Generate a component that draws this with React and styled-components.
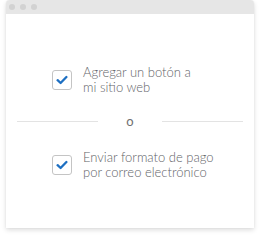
import React from "react";
import styled, { createGlobalStyle } from "styled-components";

const Global = createGlobalStyle`
  html, body { margin: 0; padding: 0; background: #ffffff; }
  body { font-family: "Lato", "Open Sans", sans-serif; }
`;

const Page = styled.div`
  width: 260px;
  height: 240px;
  padding-left: 6px;
  box-sizing: border-box;
`;

const Window = styled.div`
  width: 248px;
  height: 228px;
  background: #ffffff;
  border-radius: 4px 4px 0 0;
  box-shadow: 0 2px 5px rgba(0, 0, 0, 0.14), 0 0 1px rgba(0, 0, 0, 0.12);
  display: flex;
  flex-direction: column;
`;

const TitleBar = styled.div`
  height: 14px;
  background: #e6e6e6;
  border-radius: 4px 4px 0 0;
  display: flex;
  align-items: center;
  gap: 5px;
  padding-left: 3px;
`;

const Dot = styled.span`
  width: 6px;
  height: 6px;
  border-radius: 50%;
  background: #d2d2d2;
`;

const Body = styled.div`
  flex: 1;
  display: flex;
  flex-direction: column;
  padding-top: 51px;
`;

const Option = styled.label`
  display: flex;
  align-items: center;
  gap: 11px;
  padding-left: 46px;
`;

const Box = styled.span`
  width: 18px;
  height: 18px;
  border: 1px solid #c4c4c4;
  border-radius: 3px;
  display: flex;
  align-items: center;
  justify-content: center;
  flex-shrink: 0;
`;

const Text = styled.span`
  font-size: 13px;
  font-weight: 300;
  line-height: 15px;
  color: #5f6468;
`;

const Divider = styled.div`
  display: flex;
  align-items: center;
  padding: 0 11px;
  margin: 19px 0 21px;
  height: 15px;
`;

const Line = styled.span`
  flex: 1;
  height: 1px;
  background: #e3e3e3;
`;

const Or = styled.span`
  width: 64px;
  text-align: center;
  font-size: 13px;
  line-height: 15px;
  color: #707070;
`;

const Check = () => (
  <svg width="12" height="10" viewBox="0 0 12 10">
    <path d="M1.6 5.2 L4.6 8 L10.4 2" fill="none" stroke="#1d6fc2" strokeWidth="2.3" strokeLinecap="round" strokeLinejoin="round" />
  </svg>
);

export default function App() {
  return (
    <>
      <Global />
      <Page>
        <Window>
          <TitleBar>
            <Dot />
            <Dot />
            <Dot />
          </TitleBar>
          <Body>
            <Option>
              <Box><Check /></Box>
              <Text>Agregar un botón a<br />mi sitio web</Text>
            </Option>
            <Divider>
              <Line />
              <Or>o</Or>
              <Line />
            </Divider>
            <Option>
              <Box><Check /></Box>
              <Text>Enviar formato de pago<br />por correo electrónico</Text>
            </Option>
          </Body>
        </Window>
      </Page>
    </>
  );
}
